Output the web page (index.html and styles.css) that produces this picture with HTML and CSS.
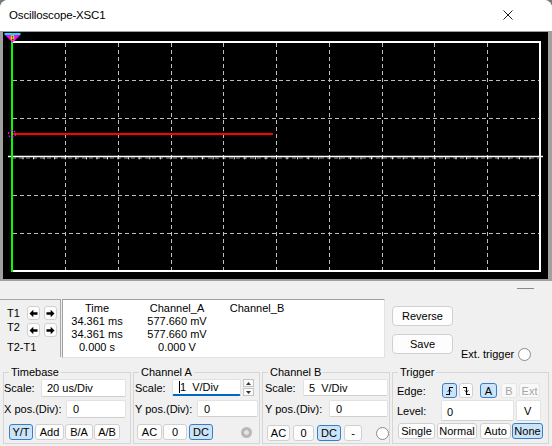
FILE: index.html
```html
<!DOCTYPE html>
<html>
<head>
<meta charset="utf-8">
<title>Oscilloscope-XSC1</title>
<link rel="stylesheet" href="styles.css">
</head>
<body>
<div class="window">
  <div class="titlebar">
    <span class="title">Oscilloscope-XSC1</span>
    <svg class="close" width="10" height="10" viewBox="0 0 10 10"><path d="M0.5 0.5 L9.5 9.5 M9.5 0.5 L0.5 9.5" stroke="#1a1a1a" stroke-width="1" fill="none"/></svg>
  </div>

  <div class="scope-frame">
    <div class="screen">
      <svg width="545" height="247" viewBox="3 32 545 247">
        <defs>
          <pattern id="ticks" x="12" y="0" width="10.56" height="10" patternUnits="userSpaceOnUse">
            <rect x="0" y="0" width="1" height="10" fill="#ffffff"/>
          </pattern>
        </defs>
        <g stroke="#bdbdbd" stroke-width="1" stroke-dasharray="4 3" fill="none">
          <line x1="65.5" y1="43" x2="65.5" y2="271"/>
          <line x1="118.5" y1="43" x2="118.5" y2="271"/>
          <line x1="171.5" y1="43" x2="171.5" y2="271"/>
          <line x1="223.5" y1="43" x2="223.5" y2="271"/>
          <line x1="276.5" y1="43" x2="276.5" y2="271"/>
          <line x1="329.5" y1="43" x2="329.5" y2="271"/>
          <line x1="382.5" y1="43" x2="382.5" y2="271"/>
          <line x1="434.5" y1="43" x2="434.5" y2="271"/>
          <line x1="487.5" y1="43" x2="487.5" y2="271"/>
          <line x1="13" y1="80.5" x2="540" y2="80.5"/>
          <line x1="13" y1="118.5" x2="540" y2="118.5"/>
          <line x1="13" y1="195.5" x2="540" y2="195.5"/>
          <line x1="13" y1="233.5" x2="540" y2="233.5"/>
        </g>
        <rect x="12" y="42" width="528" height="229" fill="none" stroke="#ffffff" stroke-width="2"/>
        <line x1="8" y1="156.5" x2="543" y2="156.5" stroke="#ffffff" stroke-width="1.5"/>
        <line x1="12" y1="158" x2="540" y2="158" stroke="#9a9a9a" stroke-width="1" stroke-dasharray="4 3"/>
        <rect x="12" y="157.3" width="528" height="2" fill="url(#ticks)"/>
        <line x1="12" y1="134" x2="273" y2="134" stroke="#ff0000" stroke-width="2"/>
        <line x1="12" y1="40" x2="12" y2="272" stroke="#00ff00" stroke-width="2"/>
        <circle cx="12" cy="134" r="3.5" fill="none" stroke="#ff00ff" stroke-width="1.2" stroke-dasharray="2 1.6"/>
        <rect x="4.5" y="33" width="16" height="2" fill="#00e5ff"/>
        <polygon points="5,35 20.5,35 12.5,42.5" fill="#ff00ff"/>
        <rect x="10.8" y="35.3" width="3.4" height="5" fill="#ffe000"/>
        <text x="12.5" y="40" font-size="5.5" font-family="Liberation Sans, sans-serif" text-anchor="middle" fill="#000">1</text>
      </svg>
    </div>
  </div>

  <div class="splitter"><span class="grip"></span></div>

  <div class="readouts">
    <div class="tbox">
      <div class="trow first">
        <span class="tlabel">T1</span>
        <button class="arrow"><svg width="9" height="9" viewBox="0 0 9 9"><path d="M0.5 4.5 L4.3 0.8 V3.2 H8.5 V5.8 H4.3 V8.2 Z" fill="#000"/></svg></button>
        <button class="arrow"><svg width="9" height="9" viewBox="0 0 9 9"><path d="M8.5 4.5 L4.7 0.8 V3.2 H0.5 V5.8 H4.7 V8.2 Z" fill="#000"/></svg></button>
      </div>
      <div class="trow second">
        <span class="tlabel">T2</span>
        <button class="arrow"><svg width="9" height="9" viewBox="0 0 9 9"><path d="M0.5 4.5 L4.3 0.8 V3.2 H8.5 V5.8 H4.3 V8.2 Z" fill="#000"/></svg></button>
        <button class="arrow"><svg width="9" height="9" viewBox="0 0 9 9"><path d="M8.5 4.5 L4.7 0.8 V3.2 H0.5 V5.8 H4.7 V8.2 Z" fill="#000"/></svg></button>
      </div>
      <div class="tdiff">T2-T1</div>
    </div>

    <div class="readbox">
      <span>Time</span><span>Channel_A</span><span>Channel_B</span>
      <span>34.361 ms</span><span>577.660 mV</span><span></span>
      <span>34.361 ms</span><span>577.660 mV</span><span></span>
      <span>0.000 s</span><span>0.000 V</span><span></span>
    </div>

    <div class="actions">
      <button class="btn-lg">Reverse</button>
      <button class="btn-lg">Save</button>
    </div>

    <div class="ext">
      <span>Ext. trigger</span>
      <span class="radio ext-radio"></span>
    </div>
  </div>

  <div class="groups">
    <fieldset class="group tb">
      <legend>Timebase</legend>
      <div class="row r1">
        <span class="lbl tb-l1">Scale:</span>
        <div class="field tb-f1">20 us/Div</div>
      </div>
      <div class="row r2">
        <span class="lbl tb-l2">X pos.(Div):</span>
        <div class="field tb-f2">0</div>
      </div>
      <div class="row r3 tb-r3">
        <button class="b on w24">Y/T</button>
        <button class="b w29 g2">Add</button>
        <button class="b w28 g1">B/A</button>
        <button class="b w26 g1">A/B</button>
      </div>
    </fieldset>

    <fieldset class="group ca">
      <legend>Channel A</legend>
      <div class="row r1 ca-r1">
        <span class="lbl ca-l1">Scale:</span>
        <div class="field focus ca-f1"><span class="caret"></span>1&nbsp;&nbsp;V/Div</div>
        <div class="spin">
          <span><svg width="5" height="3" viewBox="0 0 5 3"><path d="M0 3 L2.5 0 L5 3 Z" fill="#333"/></svg></span>
          <span><svg width="5" height="3" viewBox="0 0 5 3"><path d="M0 0 L2.5 3 L5 0 Z" fill="#333"/></svg></span>
        </div>
      </div>
      <div class="row r2 ca-r1">
        <span class="lbl ca-l2">Y pos.(Div):</span>
        <div class="field ca-f2">0</div>
      </div>
      <div class="row r3 ca-r3">
        <button class="b w25">AC</button>
        <button class="b w24 g1">0</button>
        <button class="b on w24 g2">DC</button>
        <span class="radio-dis"></span>
      </div>
    </fieldset>

    <fieldset class="group cb">
      <legend>Channel B</legend>
      <div class="row r1 cb-r1">
        <span class="lbl cb-l1">Scale:</span>
        <div class="field cb-f1">5&nbsp;&nbsp;V/Div</div>
      </div>
      <div class="row r2 cb-r1">
        <span class="lbl cb-l2">Y pos.(Div):</span>
        <div class="field cb-f2">0</div>
      </div>
      <div class="row r3 cb-r3">
        <button class="b w23">AC</button>
        <button class="b w21 g3">0</button>
        <button class="b on w24 g3">DC</button>
        <button class="b w18 g3">-</button>
        <span class="radio cb-radio"></span>
      </div>
    </fieldset>

    <fieldset class="group tr">
      <legend>Trigger</legend>
      <div class="row tr-r1">
        <span class="lbl tr-l1">Edge:</span>
        <button class="b on edge w15"><svg width="9" height="10" viewBox="0 0 9 10"><path d="M1 8.5 H4.5 V1.5 H8" stroke="#000" stroke-width="1.1" fill="none"/><path d="M2.8 5.6 L4.5 3.9 L6.2 5.6" stroke="#000" stroke-width="1" fill="none"/></svg></button>
        <button class="b edge w14 g2"><svg width="9" height="10" viewBox="0 0 9 10"><path d="M1 1.5 H4.5 V8.5 H8" stroke="#000" stroke-width="1.1" fill="none"/><path d="M2.8 4.4 L4.5 6.1 L6.2 4.4" stroke="#000" stroke-width="1" fill="none"/></svg></button>
        <button class="b on edge w17 g7">A</button>
        <button class="b off edge w16 g4">B</button>
        <button class="b off edge w21 g2">Ext</button>
      </div>
      <div class="row tr-r2">
        <span class="lbl tr-l2">Level:</span>
        <div class="field tr-f1">0</div>
        <div class="field tr-unit">V</div>
      </div>
      <div class="row tr-r3">
        <button class="b w37">Single</button>
        <button class="b w40 g2">Normal</button>
        <button class="b w31 g3">Auto</button>
        <button class="b on w31 g1">None</button>
      </div>
    </fieldset>
  </div>
</div>
</body>
</html>
```

FILE: styles.css
```css
* { box-sizing: border-box; }

body {
  margin: 0;
  background: #7a7a7a;
  font-family: "Liberation Sans", Arial, sans-serif;
  font-size: 11px;
  color: #000;
}

.window {
  width: 552px;
  height: 446px;
  background: #f0f0f0;
  overflow: hidden;
  border-radius: 8px 8px 0 0;
  display: flex;
  flex-direction: column;
}

.titlebar {
  height: 31px;
  flex: none;
  background: #ffffff;
  display: flex;
  align-items: center;
  justify-content: space-between;
  padding: 0 39px 1px 9px;
}

.title {
  font-size: 11.5px;
  letter-spacing: -0.15px;
}

.close { display: block; }

.scope-frame {
  height: 250px;
  flex: none;
  background: #a0a0a0;
  padding: 1px 4px 2px 3px;
}

.screen {
  width: 545px;
  height: 247px;
  background: #000;
}

.screen svg { display: block; }

.splitter {
  height: 16px;
  flex: none;
  display: flex;
  justify-content: flex-end;
  align-items: flex-start;
  padding: 7px 18px 0 0;
}

.grip {
  width: 17px;
  height: 1px;
  background: #8a8a8a;
}

/* readout row */
.readouts {
  height: 65px;
  flex: none;
  display: flex;
  align-items: flex-start;
}

.tbox {
  width: 61px;
  height: 58px;
  margin-top: 2px;
  border-top: 1px solid #a8a8a8;
  border-right: 1px solid #a8a8a8;
  padding-left: 7px;
}

.trow {
  display: flex;
  align-items: flex-start;
  height: 14px;
}

.trow.first { margin-top: 6px; }
.trow.second { margin-top: 3px; }

.tlabel {
  width: 20px;
  line-height: 14px;
}

.trow.second .tlabel { margin-top: -3px; }

.tdiff {
  margin-top: 3px;
  line-height: 14px;
}

button {
  font: inherit;
  color: #000;
  margin: 0;
}

.arrow {
  width: 13px;
  height: 14px;
  padding: 0;
  border: 1px solid #d0d0d0;
  border-radius: 3px;
  background: #fdfdfd;
  display: flex;
  align-items: center;
  justify-content: center;
}

.arrow + .arrow { margin-left: 4px; }

.readbox {
  width: 323px;
  height: 59px;
  margin: 2px 0 0 1px;
  background: #ffffff;
  border: 1px solid;
  border-color: #a0a0a0 #e3e3e3 #e3e3e3 #a0a0a0;
  display: grid;
  grid-template-columns: 68px 92px 68px;
  grid-auto-rows: 13px;
  align-content: start;
  padding-top: 2px;
  line-height: 13px;
}

.readbox span {
  text-align: center;
  white-space: nowrap;
}

.actions {
  margin: 9px 0 0 7px;
  display: flex;
  flex-direction: column;
  gap: 8px;
}

.btn-lg {
  width: 61px;
  height: 20px;
  padding: 0;
  border: 1px solid #d0d0d0;
  border-radius: 4px;
  background: #fdfdfd;
}

.ext {
  margin: 50px 0 0 8px;
  display: flex;
  align-items: center;
  line-height: 14px;
  white-space: nowrap;
}

.radio {
  display: block;
  border-radius: 50%;
  border: 1px solid #8b8b8b;
  background: #ffffff;
  flex: none;
}

.ext-radio {
  width: 13px;
  height: 13px;
  margin-left: 4px;
}

/* groups */
.groups {
  height: 84px;
  flex: none;
  display: flex;
  padding: 3px 0 0 3px;
  gap: 2px;
}

.group {
  margin: 0;
  padding: 0;
  border: 1px solid #d6d6d6;
  min-width: 0;
  height: 79px;
}

.group legend {
  padding: 0 2px;
  margin-left: 5px;
  line-height: 14px;
}

.tb { width: 128px; }
.ca { width: 127px; }
.cb { width: 128px; }
.tr { width: 157px; }

.row {
  display: flex;
  align-items: center;
}

.r1 { height: 18px; }
.r2 { height: 18px; margin-top: 3px; }
.r3 { height: 16px; margin-top: 6px; }

.lbl {
  flex: none;
  white-space: nowrap;
}

.field {
  height: 100%;
  flex: none;
  background: #ffffff;
  border: 1px solid #e2e2e2;
  border-bottom-color: #cfcfcf;
  border-radius: 2px;
  padding-left: 5px;
  display: flex;
  align-items: center;
  white-space: nowrap;
}

.field.focus {
  border-bottom: 2px solid #0067c0;
}

.caret {
  display: block;
  width: 1px;
  height: 12px;
  background: #000;
  margin-right: 0;
}

.b {
  height: 100%;
  flex: none;
  padding: 0;
  border: 1px solid #d0d0d0;
  border-radius: 3px;
  background: #fdfdfd;
  display: flex;
  align-items: center;
  justify-content: center;
}

.b.on {
  background: #cce4f7;
  border-color: #3a7dc6;
}

.b.off {
  color: #a6a6a6;
  border-color: #e6e6e6;
  background: #f9f9f9;
}

.w14 { width: 14px; }
.w15 { width: 15px; }
.w16 { width: 16px; }
.w17 { width: 17px; }
.w18 { width: 18px; }
.w21 { width: 21px; }
.w23 { width: 23px; }
.w24 { width: 24px; }
.w25 { width: 25px; }
.w26 { width: 26px; }
.w28 { width: 28px; }
.w29 { width: 29px; }
.w31 { width: 31px; }
.w37 { width: 37px; }
.w40 { width: 40px; }

.g1 { margin-left: 1px; }
.g2 { margin-left: 2px; }
.g3 { margin-left: 3px; }
.g4 { margin-left: 4px; }
.g7 { margin-left: 7px; }

/* Timebase */
.tb-l1 { width: 37px; }
.tb-f1 { width: 85px; }
.tb-l2 { width: 62px; }
.tb-f2 { width: 60px; padding-left: 6px; }
.tb-r3 { padding-left: 5px; }

/* Channel A */
.ca-r1 { height: 17px; }
.ca .r2 { margin-top: 4px; }
.ca-l1 { width: 38px; padding-left: 1px; }
.ca-f1 { width: 69px; padding-left: 6px; }
.ca-l2 { width: 63px; padding-left: 1px; }
.ca-f2 { width: 61px; padding-left: 6px; }
.ca-r3 { padding-left: 3px; margin-top: 7px; }

.spin {
  width: 11px;
  height: 17px;
  margin-left: 2px;
  display: flex;
  flex-direction: column;
  gap: 1px;
}

.spin span {
  flex: 1;
  border: 1px solid #c4c4c4;
  background: #fbfbfb;
  display: flex;
  align-items: center;
  justify-content: center;
}

.radio-dis {
  display: block;
  width: 11px;
  height: 11px;
  margin-left: 28px;
  border-radius: 50%;
  background: radial-gradient(circle, #e4e4e4 0 2px, #b8b8b8 2.6px);
}

/* Channel B */
.cb-r1 { height: 17px; }
.cb .r2 { margin-top: 4px; }
.cb-l1 { width: 40px; padding-left: 2px; }
.cb-f1 { width: 85px; }
.cb-l2 { width: 66px; padding-left: 2px; }
.cb-f2 { width: 59px; padding-left: 6px; }
.cb-r3 { padding-left: 4px; margin-top: 8px; }
.cb-radio {
  width: 13px;
  height: 13px;
  margin-left: 14px;
}

/* Trigger */
.tr-r1 { height: 15px; margin-top: 4px; }
.tr-r2 { height: 21px; margin-top: 2px; }
.tr-r3 { height: 16px; margin-top: 2px; padding-left: 5px; }
.tr-l1 { width: 49px; padding-left: 4px; }
.tr-l2 { width: 48px; padding-left: 4px; }
.tr-f1 { width: 73px; padding-left: 5px; padding-top: 2px; }
.tr-unit { width: 25px; margin-left: 2px; padding-left: 7px; }
.edge { height: 15px; }
```
